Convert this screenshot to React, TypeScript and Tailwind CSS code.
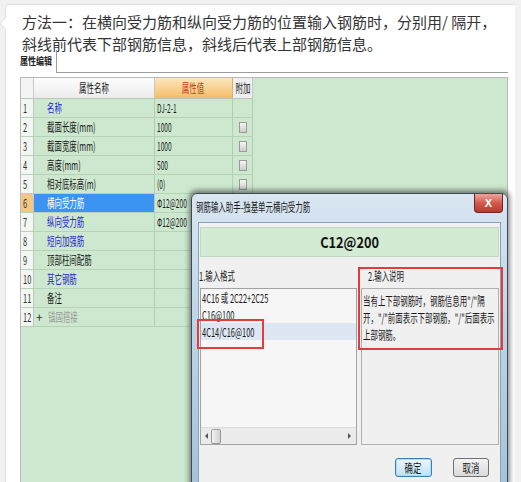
// 钢筋输入助手 截图说明 — 聊天气泡里的文字 + 属性编辑表格 + 弹出对话框
import React from "react";

type RowData = {
  n: number;
  name: string;
  value?: string;
  bar?: boolean;
  tone?: "blue" | "gray";
  check?: boolean;
  selected?: boolean;
  plus?: boolean;
};

const rows: RowData[] = [
  { n: 1, name: "名称", value: "DJ-2-1", tone: "blue" },
  { n: 2, name: "截面长度(mm)", value: "1000", check: true },
  { n: 3, name: "截面宽度(mm)", value: "1000", check: true },
  { n: 4, name: "高度(mm)", value: "500", check: true },
  { n: 5, name: "相对底标高(m)", value: "(0)", check: true },
  { n: 6, name: "横向受力筋", value: "12@200", bar: true, tone: "blue", selected: true },
  { n: 7, name: "纵向受力筋", value: "12@200", bar: true, tone: "blue" },
  { n: 8, name: "短向加强筋", tone: "blue" },
  { n: 9, name: "顶部柱间配筋" },
  { n: 10, name: "其它钢筋", tone: "blue" },
  { n: 11, name: "备注" },
  { n: 12, name: "锚固搭接", tone: "gray", plus: true },
];

export default function App() {
  return (
    <div className="relative h-[482px] w-[521px] overflow-hidden bg-[#f1f1f1] font-['Noto_Sans_CJK_SC','Noto_Sans',sans-serif]">
      <div className="relative ml-[5px] mt-[4px] h-[500px] w-[510px] rounded-tl-[4px] border-l border-t border-[#e0e0e0] bg-white">
        {/* 气泡尖角 */}
        <span className="absolute -left-[5px] top-[14px] h-[9px] w-[9px] rotate-45 border-b border-l border-[#e0e0e0] bg-white" />
        <p className="pl-[16px] pt-[6px] text-[15px] leading-[22px] text-[#333]">
          方法一：在横向受力筋和纵向受力筋的位置输入钢筋时，分别用/ 隔开，
          <br />
          斜线前代表下部钢筋信息，斜线后代表上部钢筋信息。
        </p>
        <Panel />
      </div>
    </div>
  );
}

function Panel() {
  return (
    <div className="relative -mt-[7px] ml-[14px] flex h-[434px] w-[488px] flex-col">
      {/* 属性编辑 标签 */}
      <div className="flex h-[25px]">
        <div className="w-[36px] pt-[7px] text-[10px] font-bold leading-[12px] text-[#222]">
          <span className="inline-block origin-left scale-x-[0.8] whitespace-nowrap">
            属性编辑
          </span>
        </div>
        <div className="mt-[2px] flex-1 border-b border-l border-[#9c9c9c]" />
      </div>

      {/* 表格 */}
      <div className="mt-[4px] flex flex-1 flex-col border-l border-r border-t border-[#b9b9b9] bg-[#cde8cf]">
        <div className="flex h-[21px] w-[232px] border-b border-[#b8c8b8] text-[12px]">
          <div className="w-[13px] border-r border-[#c8c8c8] bg-[#f4f4f4]" />
          <div className="flex w-[121px] items-center justify-center border-r border-[#c8c8c8] bg-linear-to-b from-[#fdfdfd] to-[#ebebeb] text-[#222]">
            <span className="inline-block scale-x-[0.62] whitespace-nowrap">属性名称</span>
          </div>
          <div className="flex w-[78px] items-center justify-center border-r border-[#d9b070] bg-linear-to-b from-[#fde7bb] to-[#f4bd66] text-[#c93a1c]">
            <span className="inline-block scale-x-[0.62] whitespace-nowrap">属性值</span>
          </div>
          <div className="flex w-[20px] items-center justify-center border-r border-[#c8c8c8] bg-[#efefef] text-[#222]">
            <span className="inline-block scale-x-[0.62] whitespace-nowrap">附加</span>
          </div>
        </div>
        {rows.map((r) => (
          <Row key={r.n} r={r} />
        ))}
      </div>

      <Dialog />
    </div>
  );
}

function Row({ r }: { r: RowData }) {
  const nameColor =
    r.selected
      ? "text-white"
      : r.tone === "blue"
        ? "text-[#2626cc]"
        : r.tone === "gray"
          ? "text-[#9a9a9a]"
          : "text-[#1a1a1a]";
  return (
    <div className="flex h-[19px] w-[232px] border-b border-[#b6d3b8] text-[12px]">
      <div
        className={`flex w-[13px] items-center border-r border-[#bccbbc] pl-[2px] text-[#333] ${
          r.selected ? "bg-[#f8c684]" : "bg-[#f3f6f2]"
        }`}
      >
        <span className="inline-block origin-left scale-x-[0.62] whitespace-nowrap">{r.n}</span>
      </div>
      <div
        className={`flex w-[121px] items-center border-r border-[#b3cdb5] ${
          r.plus ? "pl-[2px]" : "pl-[13px]"
        } ${r.selected ? "bg-[#3c94f2]" : ""} ${nameColor}`}
      >
        {r.plus && <span className="mr-[5px] text-[12px] leading-none text-[#333]">+</span>}
        <span className="inline-block origin-left scale-x-[0.62] whitespace-nowrap">{r.name}</span>
      </div>
      <div className="flex w-[78px] items-center border-r border-[#b3cdb5] pl-[2px] text-[#1a1a1a]">
        <span className="inline-block origin-left scale-x-[0.55] whitespace-nowrap">
          {r.bar && <span className="font-['Liberation_Sans',sans-serif]">Φ</span>}
          {r.value}
        </span>
      </div>
      <div className="flex w-[20px] items-center justify-center border-r border-[#b3cdb5]">
        {r.check && (
          <span className="h-[11px] w-[8px] border border-[#9a9a9a] bg-linear-to-b from-[#f6f6f6] to-[#cdcdcd]" />
        )}
      </div>
    </div>
  );
}

function Dialog() {
  return (
    <div className="absolute left-[171px] top-[145px] flex h-[300px] w-[317px] flex-col rounded-t-[6px] border border-[#3d4a55] bg-linear-to-b from-[#d9e6f1] via-[#b9d2e6] to-[#a3c2da] shadow-[0_-1px_5px_2px_rgba(0,0,0,0.45)]">
      {/* 标题栏 */}
      <div className="flex h-[28px] items-start">
        <span className="ml-[4px] mt-[5px] inline-block origin-left scale-x-[0.62] whitespace-nowrap text-[12px] leading-[16px] text-[#1a1a1a]">
          钢筋输入助手-独基单元横向受力筋
        </span>
        <div className="ml-auto mr-[4px] flex h-[19px] w-[29px] items-center justify-center rounded-b-[4px] border border-t-0 border-[#6e2626] bg-linear-to-b from-[#e9a79c] via-[#d35a4c] to-[#b83a2e] font-['Liberation_Sans',sans-serif] text-[11px] font-bold text-white">
          X
        </div>
      </div>

      {/* 客户区 */}
      <div className="relative mx-[6px] flex flex-1 flex-col border border-[#8aa2b6] bg-[#f0f0f0] text-[12px] text-[#1a1a1a]">
        <div className="mx-[1px] mt-[4px] flex h-[30px] items-center justify-center border border-[#c5d8c5] bg-[#d3ebd3]">
          <span className="inline-block scale-x-[0.85] whitespace-nowrap text-[15px] font-bold text-[#111]">
            C12@200
          </span>
        </div>

        <div className="mt-[11px] flex h-[16px] items-center">
          <div className="w-[169px]">
            <span className="inline-block origin-left scale-x-[0.62] whitespace-nowrap">1.输入格式</span>
          </div>
          <span className="inline-block origin-left scale-x-[0.62] whitespace-nowrap">2.输入说明</span>
        </div>

        <div className="mt-[4px] flex gap-[4px] pl-[1px]">
          {/* 输入格式列表 */}
          <div className="flex h-[157px] w-[157px] flex-col border border-[#a3a3a3] bg-[#f6f6f6]">
            <div className="flex h-[17px] items-center pl-[1px]">
              <span className="inline-block origin-left scale-x-[0.62] whitespace-nowrap">4C16 或 2C22+2C25</span>
            </div>
            <div className="flex h-[17px] items-center pl-[1px]">
              <span className="inline-block origin-left scale-x-[0.62] whitespace-nowrap">C16@100</span>
            </div>
            <div className="flex h-[17px] items-center bg-[#dce7f3] pl-[1px]">
              <span className="inline-block origin-left scale-x-[0.62] whitespace-nowrap">4C14/C16@100</span>
            </div>
            <div className="flex-1" />
            <div className="flex h-[17px] items-center border-t border-[#dcdcdc] bg-[#ebebeb] pl-[4px] pr-[5px]">
              <span className="h-0 w-0 border-y-[3px] border-r-[3px] border-y-transparent border-r-[#555]" />
              <span className="ml-[3px] h-[15px] w-[10px] rounded-[2px] border border-[#9a9a9a] bg-linear-to-r from-[#f4f4f4] to-[#d2d2d2]" />
              <span className="ml-auto h-0 w-0 border-y-[3px] border-l-[3px] border-y-transparent border-l-[#555]" />
            </div>
          </div>

          {/* 输入说明 */}
          <div className="h-[157px] w-[138px] border border-[#b0b0b0] bg-[#f0f0f0] pl-[1px] pt-[3px] leading-[17px]">
            <div>
              <span className="inline-block origin-left scale-x-[0.62] whitespace-nowrap">当有上下部钢筋时，钢筋信息用"/"隔</span>
            </div>
            <div>
              <span className="inline-block origin-left scale-x-[0.62] whitespace-nowrap">开，"/"前面表示下部钢筋，"/"后面表示</span>
            </div>
            <div>
              <span className="inline-block origin-left scale-x-[0.62] whitespace-nowrap">上部钢筋。</span>
            </div>
          </div>
        </div>

        <div className="mt-[13px] flex justify-end gap-[21px] pr-[11px]">
          <div className="flex h-[19px] w-[37px] items-center justify-center rounded-[3px] border border-[#3c7fb1] bg-linear-to-b from-[#eaf6fd] to-[#bfe3f7] shadow-[inset_0_0_0_1px_#a8dcf5]">
            <span className="inline-block scale-x-[0.7] whitespace-nowrap">确定</span>
          </div>
          <div className="flex h-[19px] w-[36px] items-center justify-center rounded-[3px] border border-[#707070] bg-linear-to-b from-[#f4f4f4] to-[#dadada]">
            <span className="inline-block scale-x-[0.7] whitespace-nowrap">取消</span>
          </div>
        </div>

        {/* 红色标注框 */}
        <span className="absolute left-[159px] top-[44px] h-[83px] w-[145px] border-2 border-[#e63b3b]" />
        <span className="absolute -left-[2px] top-[96px] h-[30px] w-[67px] border-2 border-[#e63b3b]" />
      </div>
    </div>
  );
}
